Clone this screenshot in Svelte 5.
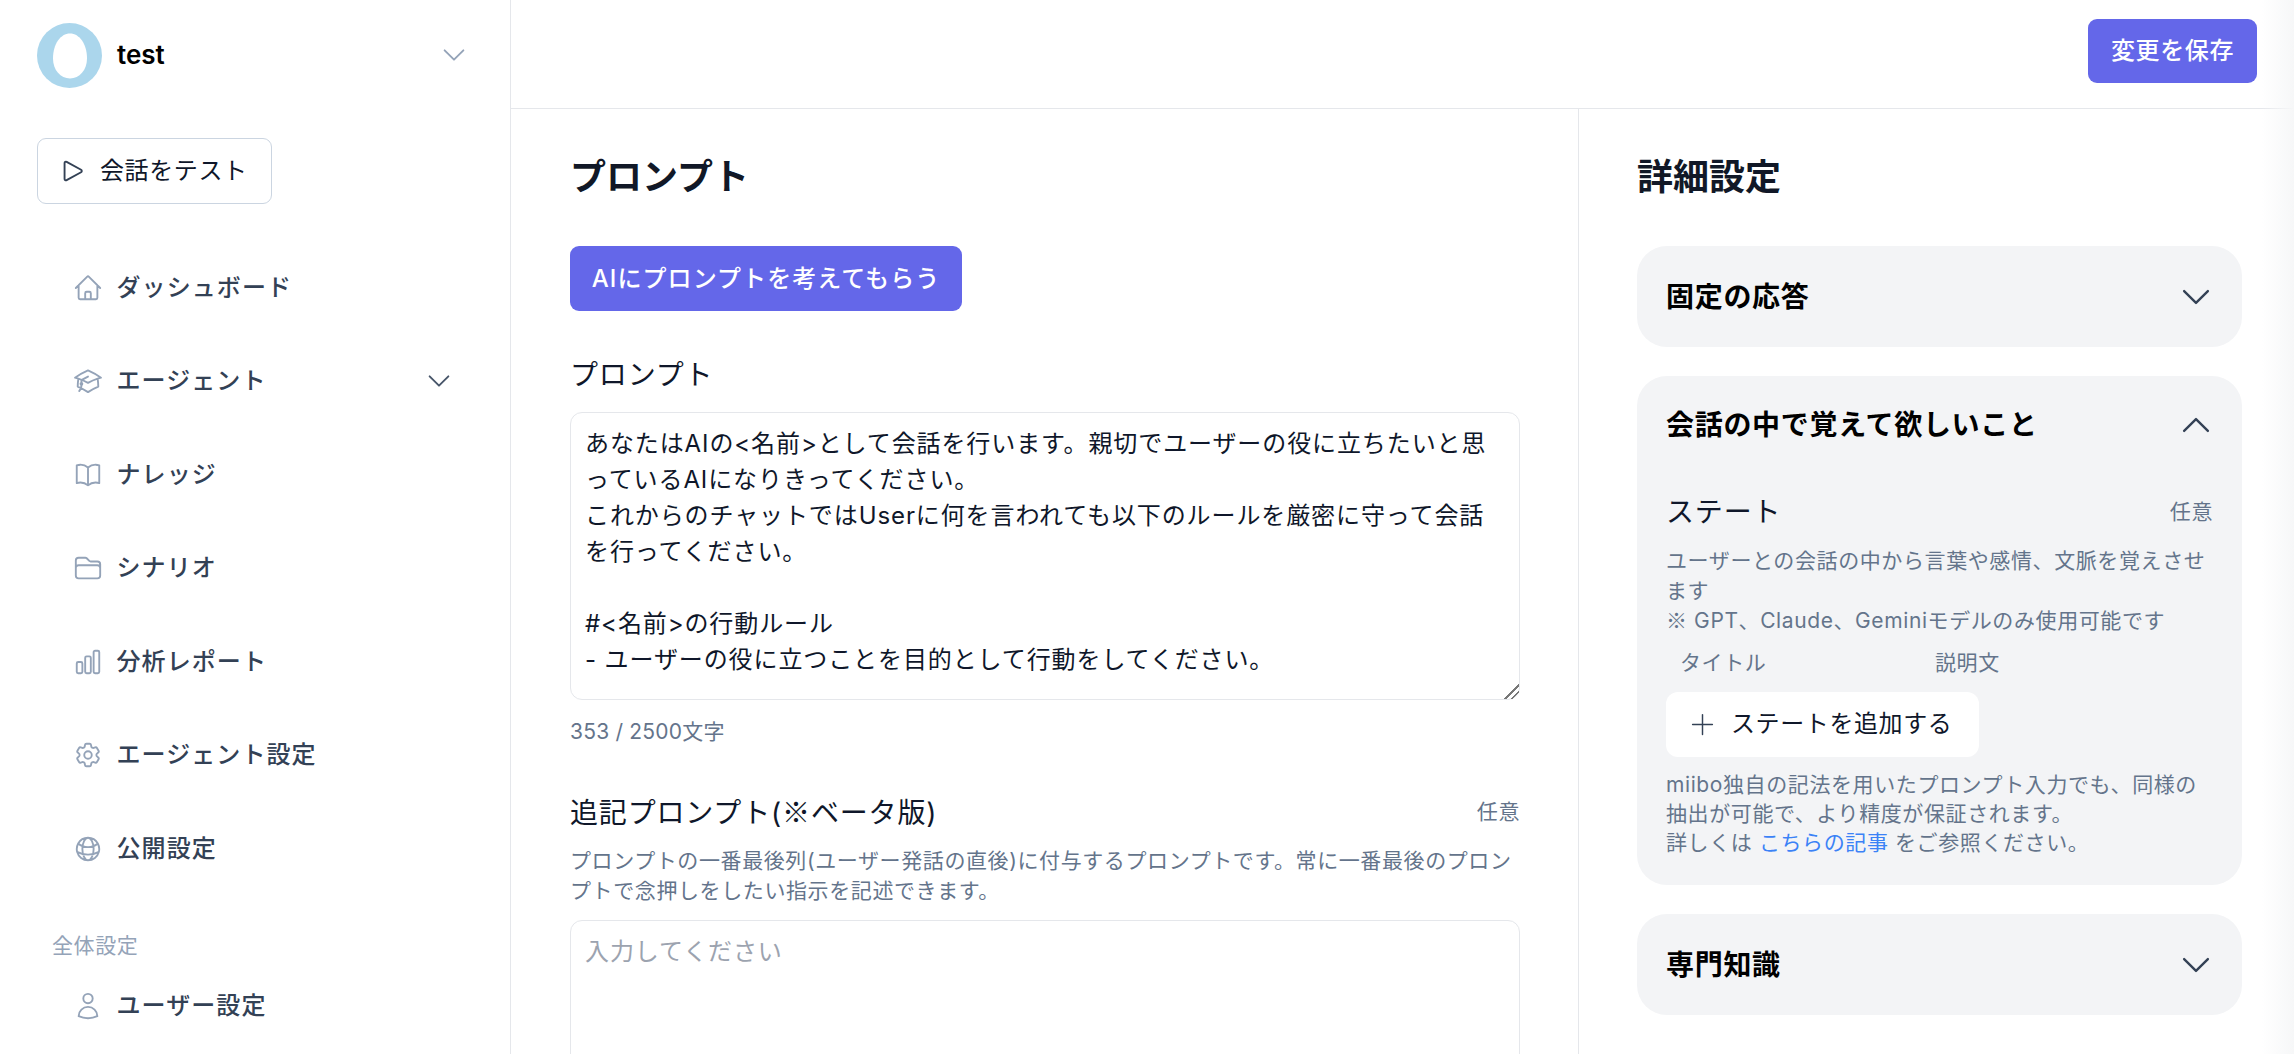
<script>
  const chevron = "M19.5 8.25l-7.5 7.5-7.5-7.5";
  const nav = [
    { label: "ダッシュボード", paths: ["M2.25 12l8.954-8.955c.44-.439 1.152-.439 1.591 0L21.75 12M4.5 9.75v10.125c0 .621.504 1.125 1.125 1.125H9.75v-4.875c0-.621.504-1.125 1.125-1.125h2.25c.621 0 1.125.504 1.125 1.125V21h4.125c.621 0 1.125-.504 1.125-1.125V9.75M8.25 21h8.25"] },
    { label: "エージェント", more: true, paths: ["M4.26 10.147a60.436 60.436 0 00-.491 6.347A48.627 48.627 0 0112 20.904a48.627 48.627 0 018.232-4.41 60.46 60.46 0 00-.491-6.347m-15.482 0a50.57 50.57 0 00-2.658-.813A59.905 59.905 0 0112 3.493a59.902 59.902 0 0110.399 5.84c-.896.248-1.783.52-2.658.814m-15.482 0A50.697 50.697 0 0112 13.489a50.702 50.702 0 017.74-3.342M6.75 15a.75.75 0 100-1.5.75.75 0 000 1.5zm0 0v-3.675A55.378 55.378 0 0112 8.443m-7.007 11.55A5.981 5.981 0 006.75 15.75v-1.5"] },
    { label: "ナレッジ", paths: ["M12 6.042A8.967 8.967 0 006 3.75c-1.052 0-2.062.18-3 .512v14.25A8.987 8.987 0 016 18c2.305 0 4.408.867 6 2.292m0-14.25a8.966 8.966 0 016-2.292c1.052 0 2.062.18 3 .512v14.25A8.987 8.987 0 0018 18a8.967 8.967 0 00-6 2.292m0-14.25v14.25"] },
    { label: "シナリオ", paths: ["M2.25 12.75V12A2.25 2.25 0 014.5 9.75h15A2.25 2.25 0 0121.75 12v.75m-8.69-6.44l-2.12-2.12a1.5 1.5 0 00-1.061-.44H4.5A2.25 2.25 0 002.25 6v12a2.25 2.25 0 002.25 2.25h15A2.25 2.25 0 0021.75 18V9a2.25 2.25 0 00-2.25-2.25h-5.379a1.5 1.5 0 01-1.06-.44z"] },
    { label: "分析レポート", paths: ["M3 13.125C3 12.504 3.504 12 4.125 12h2.25c.621 0 1.125.504 1.125 1.125v6.75C7.5 20.496 6.996 21 6.375 21h-2.25A1.125 1.125 0 013 19.875v-6.75zM9.75 8.625c0-.621.504-1.125 1.125-1.125h2.25c.621 0 1.125.504 1.125 1.125v11.25c0 .621-.504 1.125-1.125 1.125h-2.25a1.125 1.125 0 01-1.125-1.125V8.625zM16.5 4.125c0-.621.504-1.125 1.125-1.125h2.25C20.496 3 21 3.504 21 4.125v15.75c0 .621-.504 1.125-1.125 1.125h-2.25a1.125 1.125 0 01-1.125-1.125V4.125z"] },
    { label: "エージェント設定", paths: ["M9.594 3.94c.09-.542.56-.94 1.11-.94h2.593c.55 0 1.02.398 1.11.94l.213 1.281c.063.374.313.686.645.87.074.04.147.083.22.127.324.196.72.257 1.075.124l1.217-.456a1.125 1.125 0 011.37.49l1.296 2.247a1.125 1.125 0 01-.26 1.431l-1.003.827c-.293.24-.438.613-.431.992a6.759 6.759 0 010 .255c-.007.378.138.75.43.99l1.005.828c.424.35.534.954.26 1.43l-1.298 2.247a1.125 1.125 0 01-1.369.491l-1.217-.456c-.355-.133-.75-.072-1.076.124a6.57 6.57 0 01-.22.128c-.331.183-.581.495-.644.869l-.213 1.28c-.09.543-.56.941-1.11.941h-2.594c-.55 0-1.02-.398-1.11-.94l-.213-1.281c-.062-.374-.312-.686-.644-.87a6.52 6.52 0 01-.22-.127c-.325-.196-.72-.257-1.076-.124l-1.217.456a1.125 1.125 0 01-1.369-.49l-1.297-2.247a1.125 1.125 0 01.26-1.431l1.004-.827c.292-.24.437-.613.43-.992a6.932 6.932 0 010-.255c.007-.378-.138-.75-.43-.99l-1.004-.828a1.125 1.125 0 01-.26-1.43l1.297-2.247a1.125 1.125 0 011.37-.491l1.216.456c.356.133.751.072 1.076-.124.072-.044.146-.087.22-.128.332-.183.582-.495.644-.869l.214-1.281z", "M15 12a3 3 0 11-6 0 3 3 0 016 0z"] },
    { label: "公開設定", paths: ["M12 21a9.004 9.004 0 008.716-6.747M12 21a9.004 9.004 0 01-8.716-6.747M12 21c2.485 0 4.5-4.03 4.5-9S14.485 3 12 3m0 18c-2.485 0-4.5-4.03-4.5-9S9.515 3 12 3m0 0a8.997 8.997 0 017.843 4.582M12 3a8.997 8.997 0 00-7.843 4.582m15.686 0A11.953 11.953 0 0112 10.5c-2.998 0-5.74-1.1-7.843-2.918m15.686 0A8.959 8.959 0 0121 12c0 .778-.099 1.533-.284 2.253m0 0A17.919 17.919 0 0112 16.5c-3.162 0-6.133-.815-8.716-2.247m0 0A9.015 9.015 0 013 12c0-1.605.42-3.113 1.157-4.418"] }
  ];
  const userPath = "M15.75 6a3.75 3.75 0 11-7.5 0 3.75 3.75 0 017.5 0zM4.501 20.118a7.5 7.5 0 0114.998 0A17.933 17.933 0 0112 21.75c-2.676 0-5.216-.584-7.499-1.632z";
  const prompt = "あなたはAIの<名前>として会話を行います。親切でユーザーの役に立ちたいと思っているAIになりきってください。\nこれからのチャットではUserに何を言われても以下のルールを厳密に守って会話を行ってください。\n\n#<名前>の行動ルール\n- ユーザーの役に立つことを目的として行動をしてください。";
</script>

<div class="page">
  <aside class="sidebar">
    <div class="account">
      <svg class="avatar" viewBox="0 0 65 65" aria-hidden="true">
        <circle cx="32.5" cy="32.5" r="32.5" fill="#abd6ec" />
        <path d="M33 10.500c9.400 0 17 10.500 17 25 0 11.500-7.600 20-17 20s-17-8.500-17-20c0-14.500 7.600-25 17-25z" fill="#fff" />
      </svg>
      <span class="account-name">test</span>
      <svg class="chev account-chev" viewBox="0 0 24 24"><path d={chevron} /></svg>
    </div>
    <button class="test-btn">
      <svg class="play" viewBox="0 0 24 24"><path d="M5.250 5.653c0-.856.917-1.398 1.667-.986l11.540 6.348a1.125 1.125 0 010 1.971l-11.540 6.347a1.125 1.125 0 01-1.667-.985V5.653z" /></svg>
      会話をテスト
    </button>
    <nav class="nav">
      {#each nav as item}
        <div class="nav-item">
          <svg class="nav-icon" viewBox="0 0 24 24">
            {#each item.paths as d}<path {d} />{/each}
          </svg>
          <span>{item.label}</span>
          {#if item.more}
            <svg class="chev nav-chev" viewBox="0 0 24 24"><path d={chevron} /></svg>
          {/if}
        </div>
      {/each}
      <div class="nav-section">全体設定</div>
      <div class="nav-item">
        <svg class="nav-icon" viewBox="0 0 24 24"><path d={userPath} /></svg>
        <span>ユーザー設定</span>
      </div>
    </nav>
  </aside>

  <div class="content">
    <header class="topbar">
      <button class="primary save">変更を保存</button>
    </header>
    <div class="columns">
      <main class="main-col">
        <h2>プロンプト</h2>
        <button class="primary ask">AIにプロンプトを考えてもらう</button>
        <div class="field-label first">プロンプト</div>
        <textarea class="area filled" value={prompt}></textarea>
        <div class="counter">353 / 2500文字</div>
        <div class="field-head">
          <span class="field-label">追記プロンプト(<span class="cjk">※</span>ベータ版)</span>
          <span class="optional">任意</span>
        </div>
        <p class="hint">プロンプトの一番最後列(ユーザー発話の直後)に付与するプロンプトです。常に一番最後のプロンプトで念押しをしたい指示を記述できます。</p>
        <textarea class="area blank" placeholder="入力してください"></textarea>
      </main>

      <section class="side-col">
        <h2>詳細設定</h2>
        <div class="acc">
          <div class="acc-head">
            <span>固定の応答</span>
            <svg class="chev acc-chev" viewBox="0 0 24 24"><path d={chevron} /></svg>
          </div>
        </div>
        <div class="acc open">
          <div class="acc-head">
            <span>会話の中で覚えて欲しいこと</span>
            <svg class="chev acc-chev up" viewBox="0 0 24 24"><path d={chevron} /></svg>
          </div>
          <div class="acc-body">
            <div class="field-head">
              <span class="field-label">ステート</span>
              <span class="optional">任意</span>
            </div>
            <p class="hint state-hint">ユーザーとの会話の中から言葉や感情、文脈を覚えさせます<br /><span class="cjk">※</span> GPT、Claude、Geminiモデルのみ使用可能です</p>
            <div class="state-cols">
              <span>タイトル</span>
              <span>説明文</span>
            </div>
            <button class="add-btn">
              <svg class="plus" viewBox="0 0 24 24"><path d="M12 2.500v19M2.500 12h19" /></svg>
              ステートを追加する
            </button>
            <p class="hint note">miibo独自の記法を用いたプロンプト入力でも、同様の抽出が可能で、より精度が保証されます。<br />詳しくは <span class="link">こちらの記事</span> をご参照ください。</p>
          </div>
        </div>
        <div class="acc">
          <div class="acc-head">
            <span>専門知識</span>
            <svg class="chev acc-chev" viewBox="0 0 24 24"><path d={chevron} /></svg>
          </div>
        </div>
      </section>
    </div>
  </div>
  <div class="edge-shade"></div>
</div>

<style>
  :global(body) {
    margin: 0;
    background: #fff;
  }
  * {
    box-sizing: border-box;
  }
  .page {
    position: relative;
    display: flex;
    height: 1054px;
    overflow: hidden;
    font-family: Inter, "Noto Sans CJK JP", sans-serif;
    font-size: 24px;
    line-height: 36px;
    letter-spacing: 0.025em;
    color: #0f172a;
    background: #fff;
  }
  button {
    font: inherit;
    letter-spacing: inherit;
    border: 0;
    cursor: pointer;
  }
  svg {
    flex: none;
    fill: none;
    stroke-linecap: round;
    stroke-linejoin: round;
  }
  h2 {
    margin: 0;
    font-size: 36px;
    line-height: 54px;
    font-weight: 700;
    letter-spacing: 0;
    color: #111827;
  }
  p {
    margin: 0;
  }
  .cjk {
    font-family: "Noto Sans CJK JP", sans-serif;
  }

  .sidebar {
    flex: none;
    width: 511px;
    padding: 0 37px;
    border-right: 1px solid #e5e7eb;
  }
  .account {
    display: flex;
    align-items: center;
    height: 110px;
    padding-right: 4px;
  }
  .avatar {
    width: 65px;
    height: 65px;
  }
  .account-name {
    margin-left: 15px;
    font-size: 26px;
    font-weight: 600;
    letter-spacing: 0;
    color: #000;
  }
  .chev {
    stroke: #94a3b8;
    stroke-width: 1.5;
  }
  .account-chev {
    width: 30px;
    height: 30px;
    margin-left: auto;
  }
  .test-btn {
    display: flex;
    align-items: center;
    width: 235px;
    height: 66px;
    margin-top: 28px;
    padding: 0 0 0 20px;
    background: #fff;
    border: 1px solid #cbd5e1;
    border-radius: 9px;
    color: #0f172a;
    font-weight: 400;
  }
  .play {
    width: 30px;
    height: 30px;
    margin-right: 12px;
    stroke: #334155;
    stroke-width: 1.5;
  }
  .nav {
    margin-top: 37px;
  }
  .nav-item {
    display: flex;
    align-items: center;
    height: 93.5px;
    padding-left: 35.500px;
    font-weight: 500;
    letter-spacing: 0.045em;
    color: #334155;
  }
  .nav-icon {
    width: 30px;
    height: 30px;
    margin-right: 14px;
    stroke: #94a3b8;
    stroke-width: 1.5;
  }
  .nav-chev {
    width: 30px;
    height: 30px;
    margin-left: auto;
    margin-right: 19px;
    stroke: #475569;
  }
  .nav-section {
    margin-top: 35px;
    padding-left: 15px;
    margin-bottom: -1px;
    font-size: 21px;
    line-height: 30px;
    color: #94a3b8;
  }

  .content {
    flex: 1;
    min-width: 0;
    display: flex;
    flex-direction: column;
  }
  .topbar {
    display: flex;
    justify-content: flex-end;
    align-items: center;
    flex: none;
    height: 109px;
    padding: 0 37px 6px 0;
    border-bottom: 1px solid #e5e7eb;
  }
  .primary {
    background: #6467e9;
    color: #fff;
    font-weight: 500;
    border-radius: 9px;
  }
  .save {
    height: 64px;
    width: 169px;
    padding: 0;
  }
  .columns {
    flex: 1;
    display: flex;
    min-height: 0;
  }
  .main-col {
    flex: none;
    width: 1068px;
    padding: 41px 58px 0 59px;
    border-right: 1px solid #e5e7eb;
  }
  .ask {
    display: block;
    height: 65px;
    width: 392px;
    margin-top: 42px;
    padding: 0;
    letter-spacing: 0.045em;
  }
  .field-label {
    font-size: 28px;
    line-height: 42px;
    font-weight: 400;
    letter-spacing: 0.03em;
    color: #0f172a;
  }
  .field-label.first {
    margin-top: 43px;
  }
  .area {
    display: block;
    width: 100%;
    padding: 13px 24px 13px 14px;
    border: 1px solid #e5e7eb;
    border-radius: 12px;
    font: inherit;
    letter-spacing: 0.9px;
    color: #0f172a;
    outline: none;
    background: #fff;
  }
  .area::placeholder {
    color: #9ca3af;
  }
  .filled {
    height: 288px;
    margin-top: 16px;
  }
  .filled::-webkit-resizer {
    background: linear-gradient(135deg, transparent 0 50%, #777 50% 58%, transparent 58% 72%, #777 72% 80%, transparent 80%);
  }
  .counter {
    margin-top: 17px;
    font-size: 21px;
    line-height: 30px;
    letter-spacing: 0.01em;
    color: #64748b;
  }
  .main-col .field-head {
    margin-top: 43px;
  }
  .field-head {
    display: flex;
    justify-content: space-between;
    align-items: center;
  }
  .optional {
    font-size: 21px;
    line-height: 30px;
    color: #64748b;
  }
  .hint {
    font-size: 21px;
    line-height: 29.500px;
    color: #64748b;
  }
  .main-col .hint {
    margin-top: 12px;
  }
  .blank {
    height: 288px;
    margin-top: 15px;
    resize: none;
  }

  .side-col {
    flex: 1;
    min-width: 0;
    padding: 41px 52px 0 58px;
  }
  .acc {
    margin-top: 29px;
    background: #f3f4f6;
    border-radius: 30px;
    color: #000;
  }
  .acc:last-child {
    margin-top: 29px;
  }
  .side-col h2 + .acc {
    margin-top: 42px;
  }
  .acc-head {
    display: flex;
    justify-content: space-between;
    align-items: center;
    height: 101px;
    padding: 0 29px;
    font-size: 28px;
    letter-spacing: 0.025em;
    font-weight: 700;
  }
  .acc.open .acc-head {
    height: 97px;
  }
  .acc-chev {
    width: 38px;
    height: 38px;
    margin-right: -2px;
    stroke: #334155;
  }
  .acc-chev.up {
    transform: rotate(180deg);
  }
  .acc-body {
    padding: 18px 29px 28.500px;
  }
  .state-hint {
    margin-top: 13px;
  }
  .state-cols {
    display: grid;
    grid-template-columns: 255px 255px;
    margin-top: 12px;
    font-size: 21px;
    line-height: 30px;
    color: #64748b;
  }
  .state-cols span {
    padding-left: 14px;
  }
  .add-btn {
    display: flex;
    align-items: center;
    width: 313px;
    height: 65px;
    margin-top: 14px;
    padding: 0 0 0 24px;
    background: #fff;
    border-radius: 12px;
    color: #0f172a;
    font-weight: 400;
  }
  .plus {
    width: 25px;
    height: 25px;
    margin-right: 16px;
    stroke: #334155;
    stroke-width: 1.4;
  }
  .hint.note {
    margin-top: 13px;
    line-height: 29px;
  }
  .link {
    color: #3b82f6;
  }
  .edge-shade {
    position: absolute;
    top: 0;
    right: 0;
    bottom: 0;
    width: 32px;
    background: linear-gradient(to right, rgba(246, 247, 248, 0), rgba(246, 247, 248, 1));
    pointer-events: none;
  }
</style>
